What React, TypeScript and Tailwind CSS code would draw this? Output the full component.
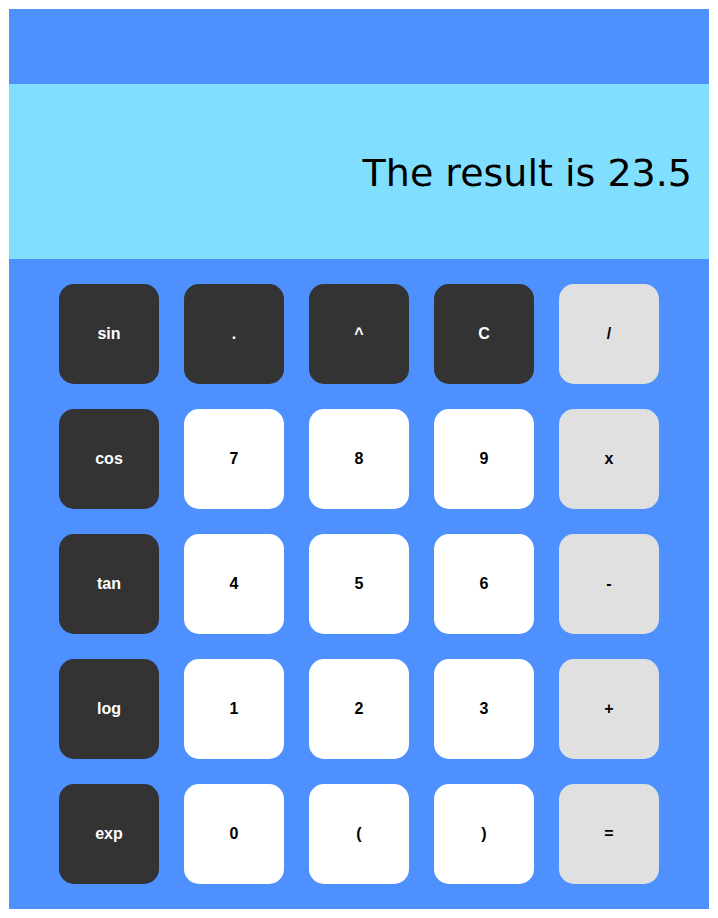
import React from "react";

type Kind = "dark" | "light" | "op";
const rows: [string, Kind][][] = [
  [["sin", "dark"], [".", "dark"], ["^", "dark"], ["C", "dark"], ["/", "op"]],
  [["cos", "dark"], ["7", "light"], ["8", "light"], ["9", "light"], ["x", "op"]],
  [["tan", "dark"], ["4", "light"], ["5", "light"], ["6", "light"], ["-", "op"]],
  [["log", "dark"], ["1", "light"], ["2", "light"], ["3", "light"], ["+", "op"]],
  [["exp", "dark"], ["0", "light"], ["(", "light"], [")", "light"], ["=", "op"]],
];

const kindClass: Record<Kind, string> = {
  dark: "bg-[#333333] text-white",
  light: "bg-white text-black",
  op: "bg-[#e0e0e0] text-black",
};

export default function App() {
  return (
    <div className="min-h-[918px] w-[718px] bg-white pl-[9px] pt-[9px]">
      <div className="flex w-[700px] flex-col bg-[#4d90fe]">
        <div className="h-[75px]" />
        <div
          className="flex h-[175px] items-center justify-end bg-[#80dfff] pr-[17px] pt-[4px] text-[38px] text-black"
          style={{ fontFamily: '"DejaVu Sans", sans-serif' }}
        >
          The result is 23.5
        </div>
        <div className="grid grid-cols-[repeat(5,100px)] gap-[25px] pb-[25px] pl-[50px] pt-[25px]">
          {rows.flat().map(([label, kind], i) => (
            <button
              key={i}
              className={`flex h-[100px] w-[100px] items-center justify-center rounded-[15px] text-[16px] font-bold ${kindClass[kind]}`}
              style={{ fontFamily: '"Liberation Sans", Arial, sans-serif' }}
            >
              {label}
            </button>
          ))}
        </div>
      </div>
    </div>
  );
}
